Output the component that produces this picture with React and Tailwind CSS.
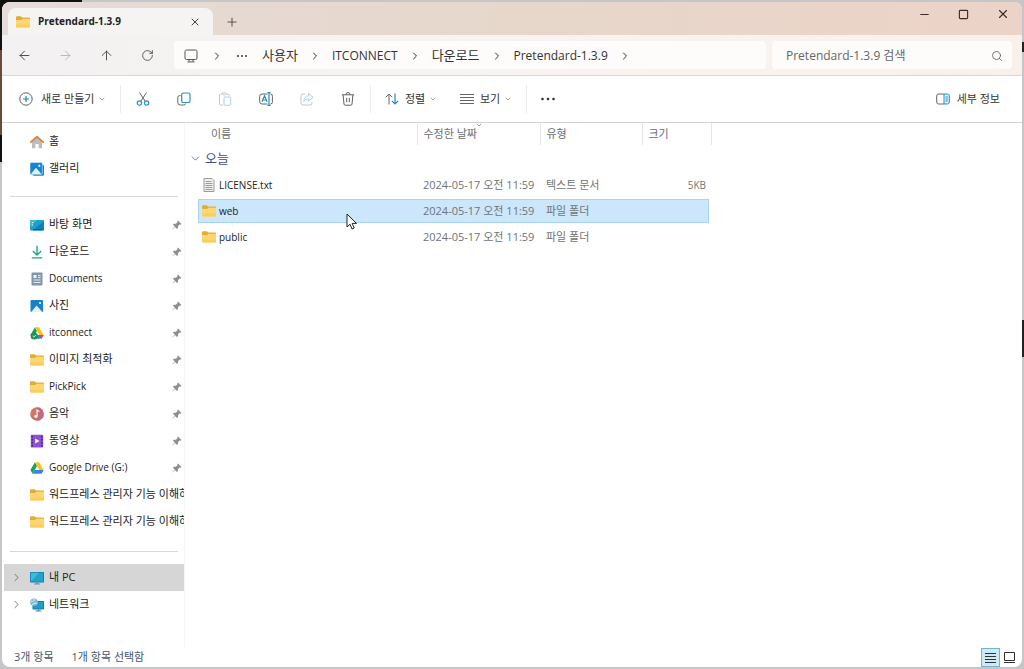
import {
  LuArrowLeft,
  LuArrowRight,
  LuArrowUp,
  LuChevronDown,
  LuChevronRight,
  LuMinus,
  LuPlus,
  LuRotateCw,
  LuSearch,
  LuSquare,
  LuX,
} from "react-icons/lu";

function FolderIcon() {
  return (
    <svg width="14" height="14" viewBox="0 0 14 14" className="shrink-0">
      <path d="M0 2.2a1 1 0 0 1 1-1h3.6l1.6 1.4H13a1 1 0 0 1 1 1V8H0z" fill="#e3ab37" />
      <path d="M0 4.9h5l1.500-1.100H13a1 1 0 0 1 1 1v6.800a1 1 0 0 1-1 1H1a1 1 0 0 1-1-1z" fill="#fdd771" />
      <path d="M0 9.500h14v2.100a1 1 0 0 1-1 1H1a1 1 0 0 1-1-1z" fill="#fbcd5c" />
    </svg>
  );
}

function TextFileIcon() {
  return (
    <svg width="14" height="14" viewBox="0 0 14 14" className="shrink-0">
      <path d="M2 .5h8l2 2v11H2z" fill="#f1f1f1" stroke="#9a9a9a" />
      <path d="M3.500 3.500h6M3.500 5.500h7M3.500 7.500h7M3.500 9.500h7M3.500 11.500h7" stroke="#9b9b9b" />
    </svg>
  );
}

function HomeIcon() {
  return (
    <svg width="14" height="14" viewBox="0 0 14 14">
      <path d="M2 6.2 7 2l5 4.2v7H8.6V9H5.4v4.2H2z" fill="#bdbdbf" />
      <path d="M.8 7.2 7 1.6l6.2 5.6" fill="none" stroke="#dd8136" strokeWidth="1.7" strokeLinecap="round" strokeLinejoin="round" />
    </svg>
  );
}

function GalleryIcon() {
  return (
    <svg width="14" height="14" viewBox="0 0 14 14">
      <rect x="2.5" y="2.5" width="11.5" height="11.2" rx="1.5" fill="#2a7fc0" />
      <rect x="0" y=".5" width="12.4" height="12" rx="1.2" fill="#1585d2" stroke="#e8f4fc" strokeWidth=".5" />
      <path d="m1 12 5-6.2L11.4 12z" fill="#dff1fd" />
      <circle cx="9.3" cy="3.8" r="1.1" fill="#fff" />
    </svg>
  );
}

function DesktopIcon() {
  return (
    <svg width="14" height="14" viewBox="0 0 14 14">
      <rect x="0" y="2" width="14" height="10.5" rx="1" fill="#1ea0cf" />
      <path d="M14 3v8.5a1 1 0 0 1-1 1H2.5z" fill="#127eba" />
      <path d="M0 9.5V3a1 1 0 0 1 1-1h6z" fill="#35c0d3" />
      <path d="M2 4.5h1M2 7h1" stroke="#fff" />
      <path d="M3 11.5h9" stroke="#0c5c96" />
    </svg>
  );
}

function DownloadIcon() {
  return (
    <svg width="14" height="14" viewBox="0 0 14 14" fill="none" stroke="#22a585" strokeWidth="1.4">
      <path d="M7 .8v9M2.8 6 7 10l4.2-4M1.8 12.9h10.4" />
    </svg>
  );
}

function DocumentsIcon() {
  return (
    <svg width="14" height="14" viewBox="0 0 14 14">
      <rect x="1.5" y=".5" width="11" height="13" rx="1" fill="#8296ab" />
      <path d="M3.5 3h3v3h-3z" fill="#eef3f8" />
      <path d="M8 3.5h2.6M8 5.5h2.6M3.5 8h7M3.5 10.5h7" stroke="#e6edf4" />
    </svg>
  );
}

function PicturesIcon() {
  return (
    <svg width="14" height="14" viewBox="0 0 14 14">
      <rect x=".5" y="1" width="12.6" height="12" rx="1" fill="#1482cf" />
      <path d="m1.2 13 5.4-6.4L12.4 13z" fill="#e2f2fd" />
      <circle cx="10" cy="4" r="1.1" fill="#fff" />
    </svg>
  );
}

function DriveIcon({ synced }) {
  return (
    <svg width="14" height="14" viewBox="0 0 14 14">
      <path d="M4.9 1.2 .4 9l2.2 3.8L7 5z" fill="#1aa25a" />
      <path d="M4.9 1.2h4.2L13.6 9H9.3z" fill="#fbc116" />
      <path d="M4.8 9h8.8l-2.2 3.8H2.6z" fill="#3c7ff0" />
      <path d="M9.3 9h4.3l-2.2 3.8z" fill={synced ? "#e5483b" : "#3c7ff0"} />
      {synced && (
        <>
          <circle cx="4.2" cy="10" r="3.6" fill="#199650" />
          <path d="m2.6 10 1.2 1.2 2-2.3" fill="none" stroke="#d9f2e2" />
        </>
      )}
    </svg>
  );
}

function MusicIcon() {
  return (
    <svg width="14" height="14" viewBox="0 0 14 14">
      <circle cx="7" cy="7" r="6.8" fill="#cf766a" />
      <path d="M7 .2A6.8 6.8 0 0 1 7 13.8z" fill="#bf6c80" />
      <ellipse cx="5.9" cy="9.4" rx="1.6" ry="1.4" fill="#fff" />
      <path d="M7.1 9.4V3l2.3 1.6" fill="none" stroke="#fff" strokeWidth="1.1" />
    </svg>
  );
}

function VideosIcon() {
  return (
    <svg width="14" height="14" viewBox="0 0 14 14">
      <rect x=".8" y=".8" width="12.4" height="12.6" rx="1" fill="#8b50d6" />
      <path d="M2.2 2v10.5M11.8 2v10.5" stroke="#3f1d7d" strokeWidth="1.3" strokeDasharray="1.6 1.4" />
      <path d="M5.2 4.4v5.2L9.6 7z" fill="#fff" />
    </svg>
  );
}

function PcIcon() {
  return (
    <svg width="14" height="14" viewBox="0 0 14 14">
      <rect x="0" y="1" width="14" height="10.5" rx=".8" fill="#0f76ac" />
      <path d="M.8 1.8h12.4v8.9H.8z" fill="#22a3cc" />
      <path d="M.8 10.7V1.8h8z" fill="#37bfd9" />
      <path d="M6 11.5h2v1h2v.9H4v-.9h2z" fill="#6f8fa3" />
    </svg>
  );
}

function NetworkIcon() {
  return (
    <svg width="14" height="14" viewBox="0 0 14 14">
      <rect x="2.5" y="3" width="11.500" height="8.6" rx=".8" fill="#1479ae" />
      <path d="M3.500 4H13v6.600H3.500z" fill="#219dc6" />
      <path d="M7.6 11.6h1.800v1h2v.9H5.6v-.9h2z" fill="#5e8298" />
      <circle cx="4" cy="4.2" r="3.8" fill="#7db9d8" />
      <path d="M1 3.2c2 1.2 3.600-.6 3.200-2.200M2.200 7.200c0-2 2.400-2.200 4.600-2" fill="none" stroke="#e3f3fa" />
    </svg>
  );
}

function PinIcon() {
  return (
    <svg width="10" height="10" viewBox="0 0 10 10" className="ml-auto shrink-0">
      <path d="M6 .6 9.400 4l-.9.700-.9-.1-1.500 1.500-.1 2-1 .9L3 6.900.5 9.500l0-.5L2.800 6.500.900 4.700l1-.9 2-.1L5.500 2.200 5.300 1.200z" fill="#8b8f92" />
    </svg>
  );
}

function MonitorIcon() {
  return (
    <svg width="14" height="14" viewBox="0 0 14 14" fill="none" stroke="#555">
      <rect x="1" y="1" width="12" height="9.500" rx="1.500" />
      <path d="M5 10.500v2M9 10.500v2M3.500 12.900h7" />
    </svg>
  );
}

function NewIcon() {
  return (
    <svg width="14" height="14" viewBox="0 0 14 14" fill="none">
      <circle cx="7" cy="7" r="6.200" stroke="#5f6468" />
      <path d="M7 4v6M4 7h6" stroke="#2182c4" strokeWidth="1.200" />
    </svg>
  );
}

function CutIcon() {
  return (
    <svg width="14" height="14" viewBox="0 0 14 14" fill="none">
      <path d="M3.500.5 9.300 9.500M10.500.5 4.700 9.500" stroke="#666" />
      <circle cx="3.400" cy="11" r="2.200" stroke="#2a94cf" strokeWidth="1.200" />
      <circle cx="10.600" cy="11" r="2.200" stroke="#2a94cf" strokeWidth="1.200" />
    </svg>
  );
}

function CopyIcon() {
  return (
    <svg width="14" height="14" viewBox="0 0 14 14" fill="none">
      <path d="M3.500 3.500H2.800a2 2 0 0 0-2 2v5a2.500 2.500 0 0 0 2.500 2.500h3.400a2 2 0 0 0 2-1.500" stroke="#666" />
      <rect x="4.700" y="1" width="8.300" height="9.500" rx="1.600" stroke="#2a8fcb" strokeWidth="1.200" />
    </svg>
  );
}

function PasteIcon() {
  return (
    <svg width="14" height="14" viewBox="0 0 14 14" fill="none" stroke="#c6c8ca">
      <path d="M5 13.200H2.500a1 1 0 0 1-1-1V3a1 1 0 0 1 1-1H4M8.500 2H10a1 1 0 0 1 1 1v1" />
      <rect x="4" y=".8" width="4.500" height="2" rx=".8" />
      <rect x="6" y="5" width="6.700" height="8.300" rx="1" stroke="#a9cfdf" />
    </svg>
  );
}

function RenameIcon() {
  return (
    <svg width="14" height="14" viewBox="0 0 14 14" fill="none">
      <path d="M8.500 2H3a2.300 2.300 0 0 0-2.300 2.300v5.400A2.300 2.300 0 0 0 3 12h5.500M11.500 2a2 2 0 0 1 1.900 2.300v5.400A2 2 0 0 1 11.500 12" stroke="#5f6468" />
      <path d="M10 .7v12.600M8.400.7h3.200M8.400 13.300h3.200M3 9.800l2.500-6 2.500 6M3.900 8h3.200" stroke="#2a87c8" strokeWidth="1.200" />
    </svg>
  );
}

function ShareIcon() {
  return (
    <svg width="14" height="14" viewBox="0 0 14 14" fill="none" stroke="#c2c5c7">
      <path d="M5.500 2H3a2 2 0 0 0-2 2v7a2 2 0 0 0 2 2h7a2 2 0 0 0 2-2v-1" />
      <path d="M8.500 1.500 13 5.300 8.500 9V6.900C6 6.900 4.600 8 3.800 9.600 4 6.200 5.600 4 8.500 3.700z" stroke="#a9cfdf" />
    </svg>
  );
}

function TrashIcon() {
  return (
    <svg width="14" height="14" viewBox="0 0 14 14" fill="none" stroke="#5c5f62">
      <path d="M.9 2.800h12.200M5 2.500a2 2 0 0 1 4 0M2.100 3l.9 9a1.300 1.300 0 0 0 1.300 1.200h5.400A1.300 1.300 0 0 0 11 12l.9-9M5.700 5.800v4.500M8.300 5.800v4.500" />
    </svg>
  );
}

function SortIcon() {
  return (
    <svg width="14" height="14" viewBox="0 0 14 14" fill="none">
      <path d="M4 12.500V2M.8 5.200 4 2l3.200 3.200" stroke="#666" />
      <path d="M10 1.500V12M6.800 8.800 10 12l3.200-3.200" stroke="#2a87c8" strokeWidth="1.200" />
    </svg>
  );
}

function LinesIcon() {
  return (
    <svg width="14" height="14" viewBox="0 0 14 14" stroke="#666">
      <path d="M0 2.500h14M0 5.500h14M0 8.500h14M0 11.500h14" />
    </svg>
  );
}

function DetailsIcon() {
  return (
    <svg width="14" height="14" viewBox="0 0 14 14" fill="none">
      <path d="M8 2H2.800A2 2 0 0 0 .7 4v6a2 2 0 0 0 2.100 2H8" stroke="#666" />
      <path d="M8 2h3.300a2 2 0 0 1 2 2v6a2 2 0 0 1-2 2H8z" fill="#dff1fa" stroke="#2492cf" />
      <path d="M9.500 5h2.300M9.500 7h2.300M9.500 9h2.300" stroke="#2492cf" />
    </svg>
  );
}

function DotsIcon({ wide }) {
  return (
    <svg width="14" height="14" viewBox="0 0 14 14" fill="#333">
      <circle cx={wide ? 1.5 : 3} cy="7" r={wide ? 1.3 : 1} />
      <circle cx="7" cy="7" r={wide ? 1.3 : 1} />
      <circle cx={wide ? 12.5 : 11} cy="7" r={wide ? 1.3 : 1} />
    </svg>
  );
}

const topLinks = [
  { name: "홈", icon: <HomeIcon /> },
  { name: "갤러리", icon: <GalleryIcon /> },
];

const quickLinks = [
  { name: "바탕 화면", icon: <DesktopIcon />, pinned: true },
  { name: "다운로드", icon: <DownloadIcon />, pinned: true },
  { name: "Documents", icon: <DocumentsIcon />, pinned: true, latin: true },
  { name: "사진", icon: <PicturesIcon />, pinned: true },
  { name: "itconnect", icon: <DriveIcon synced />, pinned: true, latin: true },
  { name: "이미지 최적화", icon: <FolderIcon />, pinned: true },
  { name: "PickPick", icon: <FolderIcon />, pinned: true, latin: true },
  { name: "음악", icon: <MusicIcon />, pinned: true },
  { name: "동영상", icon: <VideosIcon />, pinned: true },
  { name: "Google Drive (G:)", icon: <DriveIcon />, pinned: true, latin: true },
  { name: "워드프레스 관리자 기능 이해하기", icon: <FolderIcon /> },
  { name: "워드프레스 관리자 기능 이해하기", icon: <FolderIcon /> },
];

const deviceLinks = [
  { name: "내 PC", icon: <PcIcon />, expandable: true, active: true },
  { name: "네트워크", icon: <NetworkIcon />, expandable: true },
];

const crumbs = [
  { name: "사용자" },
  { name: "ITCONNECT", latin: true },
  { name: "다운로드" },
  { name: "Pretendard-1.3.9", latin: true },
];

const tools = [
  { label: "잘라내기", icon: <CutIcon /> },
  { label: "복사", icon: <CopyIcon /> },
  { label: "붙여넣기", icon: <PasteIcon /> },
  { label: "이름 바꾸기", icon: <RenameIcon /> },
  { label: "공유", icon: <ShareIcon /> },
  { label: "삭제", icon: <TrashIcon /> },
];

const files = [
  { name: "LICENSE.txt", date: "2024-05-17 오전 11:59", type: "텍스트 문서", size: "5KB", icon: <TextFileIcon /> },
  { name: "web", date: "2024-05-17 오전 11:59", type: "파일 폴더", size: "", icon: <FolderIcon />, selected: true },
  { name: "public", date: "2024-05-17 오전 11:59", type: "파일 폴더", size: "", icon: <FolderIcon /> },
];

function NavList({ items }) {
  return (
    <ul>
      {items.map((item, i) => (
        <li key={i}>
          <a
            href="#"
            className={`flex h-[27px] items-center overflow-hidden ${item.active ? "bg-[#d6d6d6]" : ""}`}
          >
            <span className="flex w-[26px] shrink-0 items-center pl-[6px] text-[#777]">
              {item.expandable && <LuChevronRight size={13} strokeWidth={1.8} />}
            </span>
            <span className="mr-[5px] shrink-0">{item.icon}</span>
            <span className={`whitespace-nowrap ${item.latin ? "text-[10px]" : ""}`}>{item.name}</span>
            {item.pinned && (
              <span className="ml-auto pr-[2px]">
                <PinIcon />
              </span>
            )}
          </a>
        </li>
      ))}
    </ul>
  );
}

function TitleBar() {
  return (
    <header className="flex h-[33px] items-end justify-between bg-linear-to-r from-[#e5dbd8] via-[#e7d7cb] to-[#ecd3c7] pl-[6px]">
      <div className="flex items-center">
        <div className="flex h-[27px] w-[205px] items-center rounded-t-lg bg-[#f6f4f3] pr-3 pl-2">
          <FolderIcon />
          <span className="ml-2 text-[10px] font-bold">Pretendard-1.3.9</span>
          <button type="button" aria-label="탭 닫기" className="ml-auto text-[#444]">
            <LuX size={12} strokeWidth={2} />
          </button>
        </div>
        <button type="button" aria-label="새 탭" className="ml-3 text-[#555]">
          <LuPlus size={14} strokeWidth={1.8} />
        </button>
      </div>
      <div className="flex self-start text-[#3a2c28]">
        <button type="button" aria-label="최소화" className="flex h-6 w-[39px] items-center justify-center">
          <LuMinus size={13} strokeWidth={2} />
        </button>
        <button type="button" aria-label="최대화" className="flex h-6 w-[39px] items-center justify-center">
          <LuSquare size={11} strokeWidth={2.5} />
        </button>
        <button type="button" aria-label="닫기" className="flex h-6 w-[39px] items-center justify-center">
          <LuX size={14} strokeWidth={2} />
        </button>
      </div>
    </header>
  );
}

function AddressBar() {
  return (
    <div className="flex h-[41px] items-center border-b border-[#ddd8d6] bg-linear-to-r from-[#f3f1f1] via-[#f8f4f1] to-[#f9f0eb] pr-[10px] pl-[2px]">
      <button type="button" aria-label="뒤로" className="flex h-7 w-[41px] items-center justify-center text-[#444]">
        <LuArrowLeft size={15} strokeWidth={1.5} />
      </button>
      <button type="button" aria-label="앞으로" disabled className="flex h-7 w-[41px] items-center justify-center text-[#b5b5b5]">
        <LuArrowRight size={15} strokeWidth={1.5} />
      </button>
      <button type="button" aria-label="위로" className="flex h-7 w-[41px] items-center justify-center text-[#444]">
        <LuArrowUp size={15} strokeWidth={1.5} />
      </button>
      <button type="button" aria-label="새로 고침" className="flex h-7 w-[41px] items-center justify-center text-[#555]">
        <LuRotateCw size={13} strokeWidth={1.7} />
      </button>
      <nav className="ml-[6px] flex h-7 min-w-0 flex-1 items-center rounded bg-[#fdfcfb] pt-[2px] text-[#333]">
        <span className="flex w-[34px] justify-center">
          <MonitorIcon />
        </span>
        <span className="flex w-[18px] justify-center">
          <LuChevronRight size={12} />
        </span>
        <button type="button" aria-label="상위 폴더" className="mr-[5px] flex w-[31px] justify-center">
          <DotsIcon />
        </button>
        {crumbs.map((crumb) => (
          <span key={crumb.name} className="flex items-center">
            <a href="#" className={crumb.latin ? "text-[12px]" : "text-[13px]"}>
              {crumb.name}
            </a>
            <span className="flex w-[34px] justify-center">
              <LuChevronRight size={12} />
            </span>
          </span>
        ))}
      </nav>
      <label className="ml-[6px] flex h-7 w-[240px] items-center rounded bg-[#fdfcfb] pt-[2px] pr-[9px] pl-[14px] text-[#666]">
        <input
          type="search"
          aria-label="검색"
          placeholder="Pretendard-1.3.9 검색"
          className="min-w-0 flex-1 text-[12px] outline-none placeholder:text-[#666]"
        />
        <LuSearch size={12} strokeWidth={1.8} />
      </label>
    </div>
  );
}

function CommandBar() {
  return (
    <div className="flex h-[47px] items-center border-b border-[#d5d3d1] text-[#333]">
      <button type="button" className="flex h-7 w-[118px] items-center pl-[17px]">
        <NewIcon />
        <span className="mr-1 ml-2">새로 만들기</span>
        <LuChevronDown size={8} className="text-[#777]" />
      </button>
      <div className="mr-[1px] h-7 w-px bg-[#ececec]"></div>
      {tools.map((tool) => (
        <button key={tool.label} type="button" aria-label={tool.label} className="flex h-7 w-[41px] items-center justify-center">
          {tool.icon}
        </button>
      ))}
      <div className="ml-[2px] h-7 w-px bg-[#ececec]"></div>
      <button type="button" className="flex h-7 w-[75px] items-center pl-[14px]">
        <SortIcon />
        <span className="mr-1 ml-[6px]">정렬</span>
        <LuChevronDown size={8} className="text-[#777]" />
      </button>
      <button type="button" className="flex h-7 w-[80px] items-center pl-[14px]">
        <LinesIcon />
        <span className="mr-1 ml-[6px]">보기</span>
        <LuChevronDown size={8} className="text-[#777]" />
      </button>
      <div className="h-7 w-px bg-[#ececec]"></div>
      <button type="button" aria-label="더 보기" className="flex h-7 w-[41px] items-center justify-center">
        <DotsIcon wide />
      </button>
      <button type="button" className="mr-[22px] ml-auto flex h-7 items-center gap-[7px]">
        <DetailsIcon />
        세부 정보
      </button>
    </div>
  );
}

function FileTable() {
  const cell = "flex h-6 items-center whitespace-nowrap";
  const mark = "border-y border-[#a6d4f2] bg-[#cce6fc]";

  return (
    <table className="w-[522px] table-fixed border-collapse text-left text-[#707478]">
      <colgroup>
        <col className="w-[228px]" />
        <col className="w-[123px]" />
        <col className="w-[102px]" />
        <col className="w-[69px]" />
      </colgroup>
      <thead>
        <tr className="h-[22px] text-[#666c74]">
          <th className="border-r border-[#e5e5e5] p-0 pl-[22px] font-normal">이름</th>
          <th className="relative border-r border-[#e5e5e5] p-0 pl-[6px] font-normal">
            수정한 날짜
            <LuChevronDown size={8} className="absolute -top-[2px] left-[57px]" />
          </th>
          <th className="border-r border-[#e5e5e5] p-0 pl-[6px] font-normal">유형</th>
          <th className="border-r border-[#e5e5e5] p-0 pl-[6px] font-normal">크기</th>
        </tr>
      </thead>
      <tbody>
        <tr className="h-[27px]">
          <td colSpan={4} className="p-0">
            <button type="button" className="flex items-center gap-[3px] text-[13px] text-[#3d4f8c]">
              <LuChevronDown size={13} strokeWidth={1.8} className="text-[#777]" />
              오늘
            </button>
          </td>
        </tr>
        {files.map((file) => (
          <tr key={file.name} className="h-[26px]">
            <td className="p-0">
              <div className={`${cell} ml-[9px] gap-[3px] pl-[3px] text-[10px] text-[#222] ${file.selected ? `border-l ${mark}` : "border-l border-transparent"}`}>
                {file.icon}
                {file.name}
              </div>
            </td>
            <td className="p-0">
              <div className={`${cell} pl-[6px] ${file.selected ? mark : ""}`}>{file.date}</div>
            </td>
            <td className="p-0">
              <div className={`${cell} pl-[6px] ${file.selected ? mark : ""}`}>{file.type}</div>
            </td>
            <td className="p-0">
              <div className={`${cell} mr-[2px] justify-end pr-[3px] text-[10px] ${file.selected ? `border-r ${mark}` : ""}`}>
                {file.size}
              </div>
            </td>
          </tr>
        ))}
      </tbody>
    </table>
  );
}

function StatusBar() {
  return (
    <footer className="flex h-[20px] items-center pr-[3px] pl-3 text-[#46566a]">
      <span>3개 항목</span>
      <span className="ml-[18px]">1개 항목 선택함</span>
      <div className="ml-auto flex">
        <button
          type="button"
          aria-label="자세히"
          className="flex size-[19px] items-center justify-center border border-[#72b4d2] bg-[#cde9f5]"
        >
          <svg width="11" height="11" viewBox="0 0 11 11" stroke="#333">
            <path d="M0 1.500h11M0 4.500h11M0 7.500h11M0 10.500h11" />
          </svg>
        </button>
        <button type="button" aria-label="큰 아이콘" className="flex size-[19px] items-center justify-center">
          <svg width="11" height="11" viewBox="0 0 11 11" fill="none" stroke="#333">
            <path d="M.5.5h10v8H.5zM0 10.500h11" />
          </svg>
        </button>
      </div>
    </footer>
  );
}

function App() {
  return (
    <div className="flex min-h-screen bg-[#c6c6c6] font-['Open_Sans','Noto_Sans_CJK_KR',sans-serif] text-[11px] text-[#222]">
      <div className="w-[2px] bg-[linear-gradient(#111_0_50px,#6b4a3c_50px_135px,#111_135px_162px,#c6c6c6_162px)]"></div>
      <div className="flex min-w-0 flex-1 flex-col bg-[linear-gradient(to_right,#111_0_80px,#c6c6c6_80px)] bg-[length:100%_8px] bg-no-repeat pt-[2px] pb-[2px]">
        <div className="flex flex-1 flex-col overflow-hidden rounded-lg bg-white">
          <TitleBar />
          <AddressBar />
          <CommandBar />
          <div className="flex flex-1">
            <aside className="w-[183px] shrink-0 border-r border-[#f6f6f6] pt-[5px] pl-[2px]">
              <NavList items={topLinks} />
              <hr className="mx-[6px] my-[14px] border-[#d9d9d9]" />
              <NavList items={quickLinks} />
              <hr className="mx-[6px] mt-4 mb-3 border-[#d9d9d9]" />
              <NavList items={deviceLinks} />
            </aside>
            <main className="relative min-w-0 flex-1 pl-1">
              <FileTable />
              {/* mouse pointer */}
              <svg width="12" height="18" viewBox="0 0 12 18" className="absolute top-[90px] left-[161px]">
                <path d="M1 1v13l3-2.800 2 4.800 2.200-1-2-4.600H10.500z" fill="#fff" stroke="#222" />
              </svg>
            </main>
          </div>
          <StatusBar />
        </div>
      </div>
      <div className="w-[2px] bg-[linear-gradient(#c6c6c6_0_42px,#222_42px_52px,#c6c6c6_52px_320px,#222_320px_357px,#c6c6c6_357px)]"></div>
    </div>
  );
}

export default App;
